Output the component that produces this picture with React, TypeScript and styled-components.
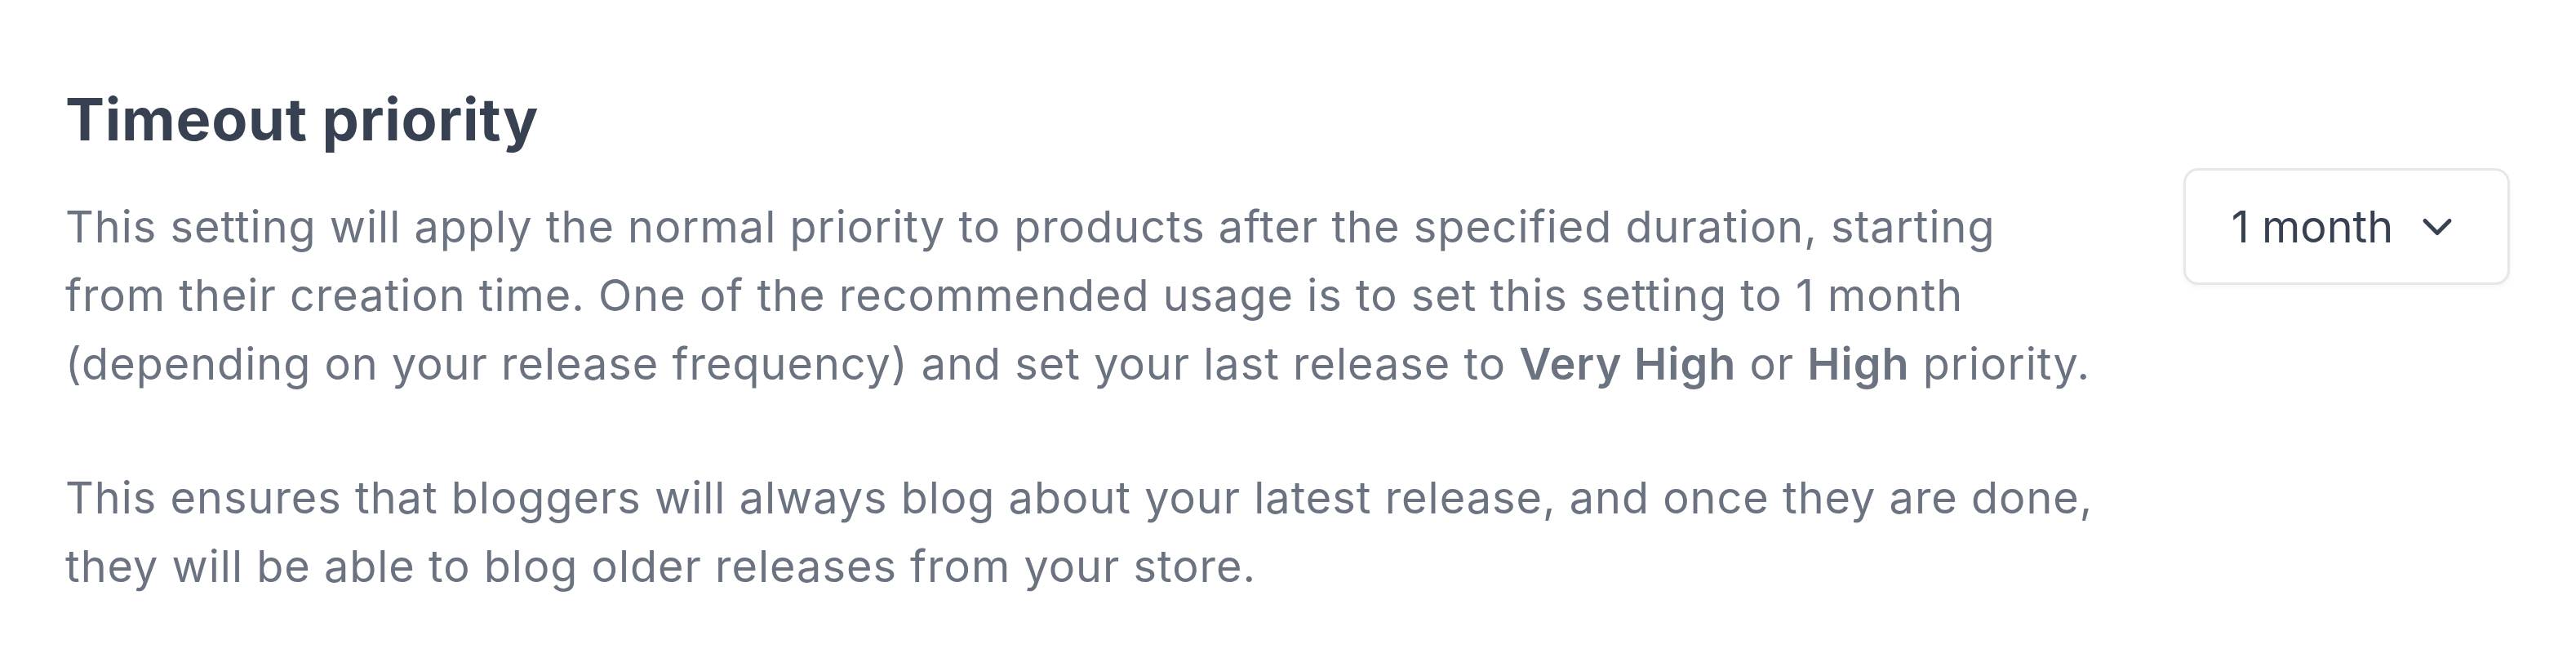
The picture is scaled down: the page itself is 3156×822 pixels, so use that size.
import React from "react";
import styled, { createGlobalStyle } from "styled-components";
import { ChevronDown } from "lucide-react";

const GlobalStyle = createGlobalStyle`
  html, body {
    margin: 0;
    padding: 0;
    background: #ffffff;
  }
  body {
    font-family: Inter, "Noto Sans", "Liberation Sans", sans-serif;
  }
`;

const App = () => {
  const [open, setOpen] = React.useState(false);

  return (
    <>
      <GlobalStyle />
      <StSection>
        <StContent>
          <StTitle>Timeout priority</StTitle>
          <StText>
            This setting will apply the normal priority to products after the specified duration, starting from
            their creation time. One of the recommended usage is to set this setting to 1 month (depending on your
            release frequency) and set your last release to <StBold>Very High</StBold> or <StBold>High</StBold>{" "}
            priority.
          </StText>
          <StText>
            This ensures that bloggers will always blog about your latest release, and once they are done, they
            will be able to blog older releases from your store.
          </StText>
        </StContent>
        <StSelectBtn type="button" aria-expanded={open} onClick={() => setOpen((prev) => !prev)}>
          1 month
          <ChevronDown size={60} strokeWidth={2} color="#374151" />
        </StSelectBtn>
      </StSection>
    </>
  );
};

export default App;

const StSection = styled.div`
  display: flex;
  justify-content: space-between;
  align-items: flex-start;
  padding: 98px 81px 60px 80px;
`;

const StContent = styled.div`
  width: 2490px;
  display: flex;
  flex-direction: column;
`;

const StTitle = styled.h2`
  margin: 0 0 42px;
  font-size: 72px;
  line-height: 96px;
  font-weight: 700;
  color: #374151;
  letter-spacing: 0.75px;
`;

const StText = styled.p`
  margin: 0;
  font-size: 54px;
  line-height: 84px;
  font-weight: 400;
  color: #6b7280;
  letter-spacing: 1px;

  & + & {
    margin-top: 80px;
  }
`;

const StBold = styled.b`
  font-weight: 600;
`;

const StSelectBtn = styled.button`
  margin-top: 108px;
  width: 400px;
  height: 143px;
  display: flex;
  align-items: center;
  justify-content: center;
  gap: 24px;
  background: #ffffff;
  border: 3px solid #e5e7eb;
  border-radius: 18px;
  box-shadow: 0 3px 6px rgba(0, 0, 0, 0.04);
  font-family: Inter, "Noto Sans", "Liberation Sans", sans-serif;
  font-size: 54px;
  line-height: 84px;
  color: #374151;
  cursor: pointer;
  padding: 0;
`;
